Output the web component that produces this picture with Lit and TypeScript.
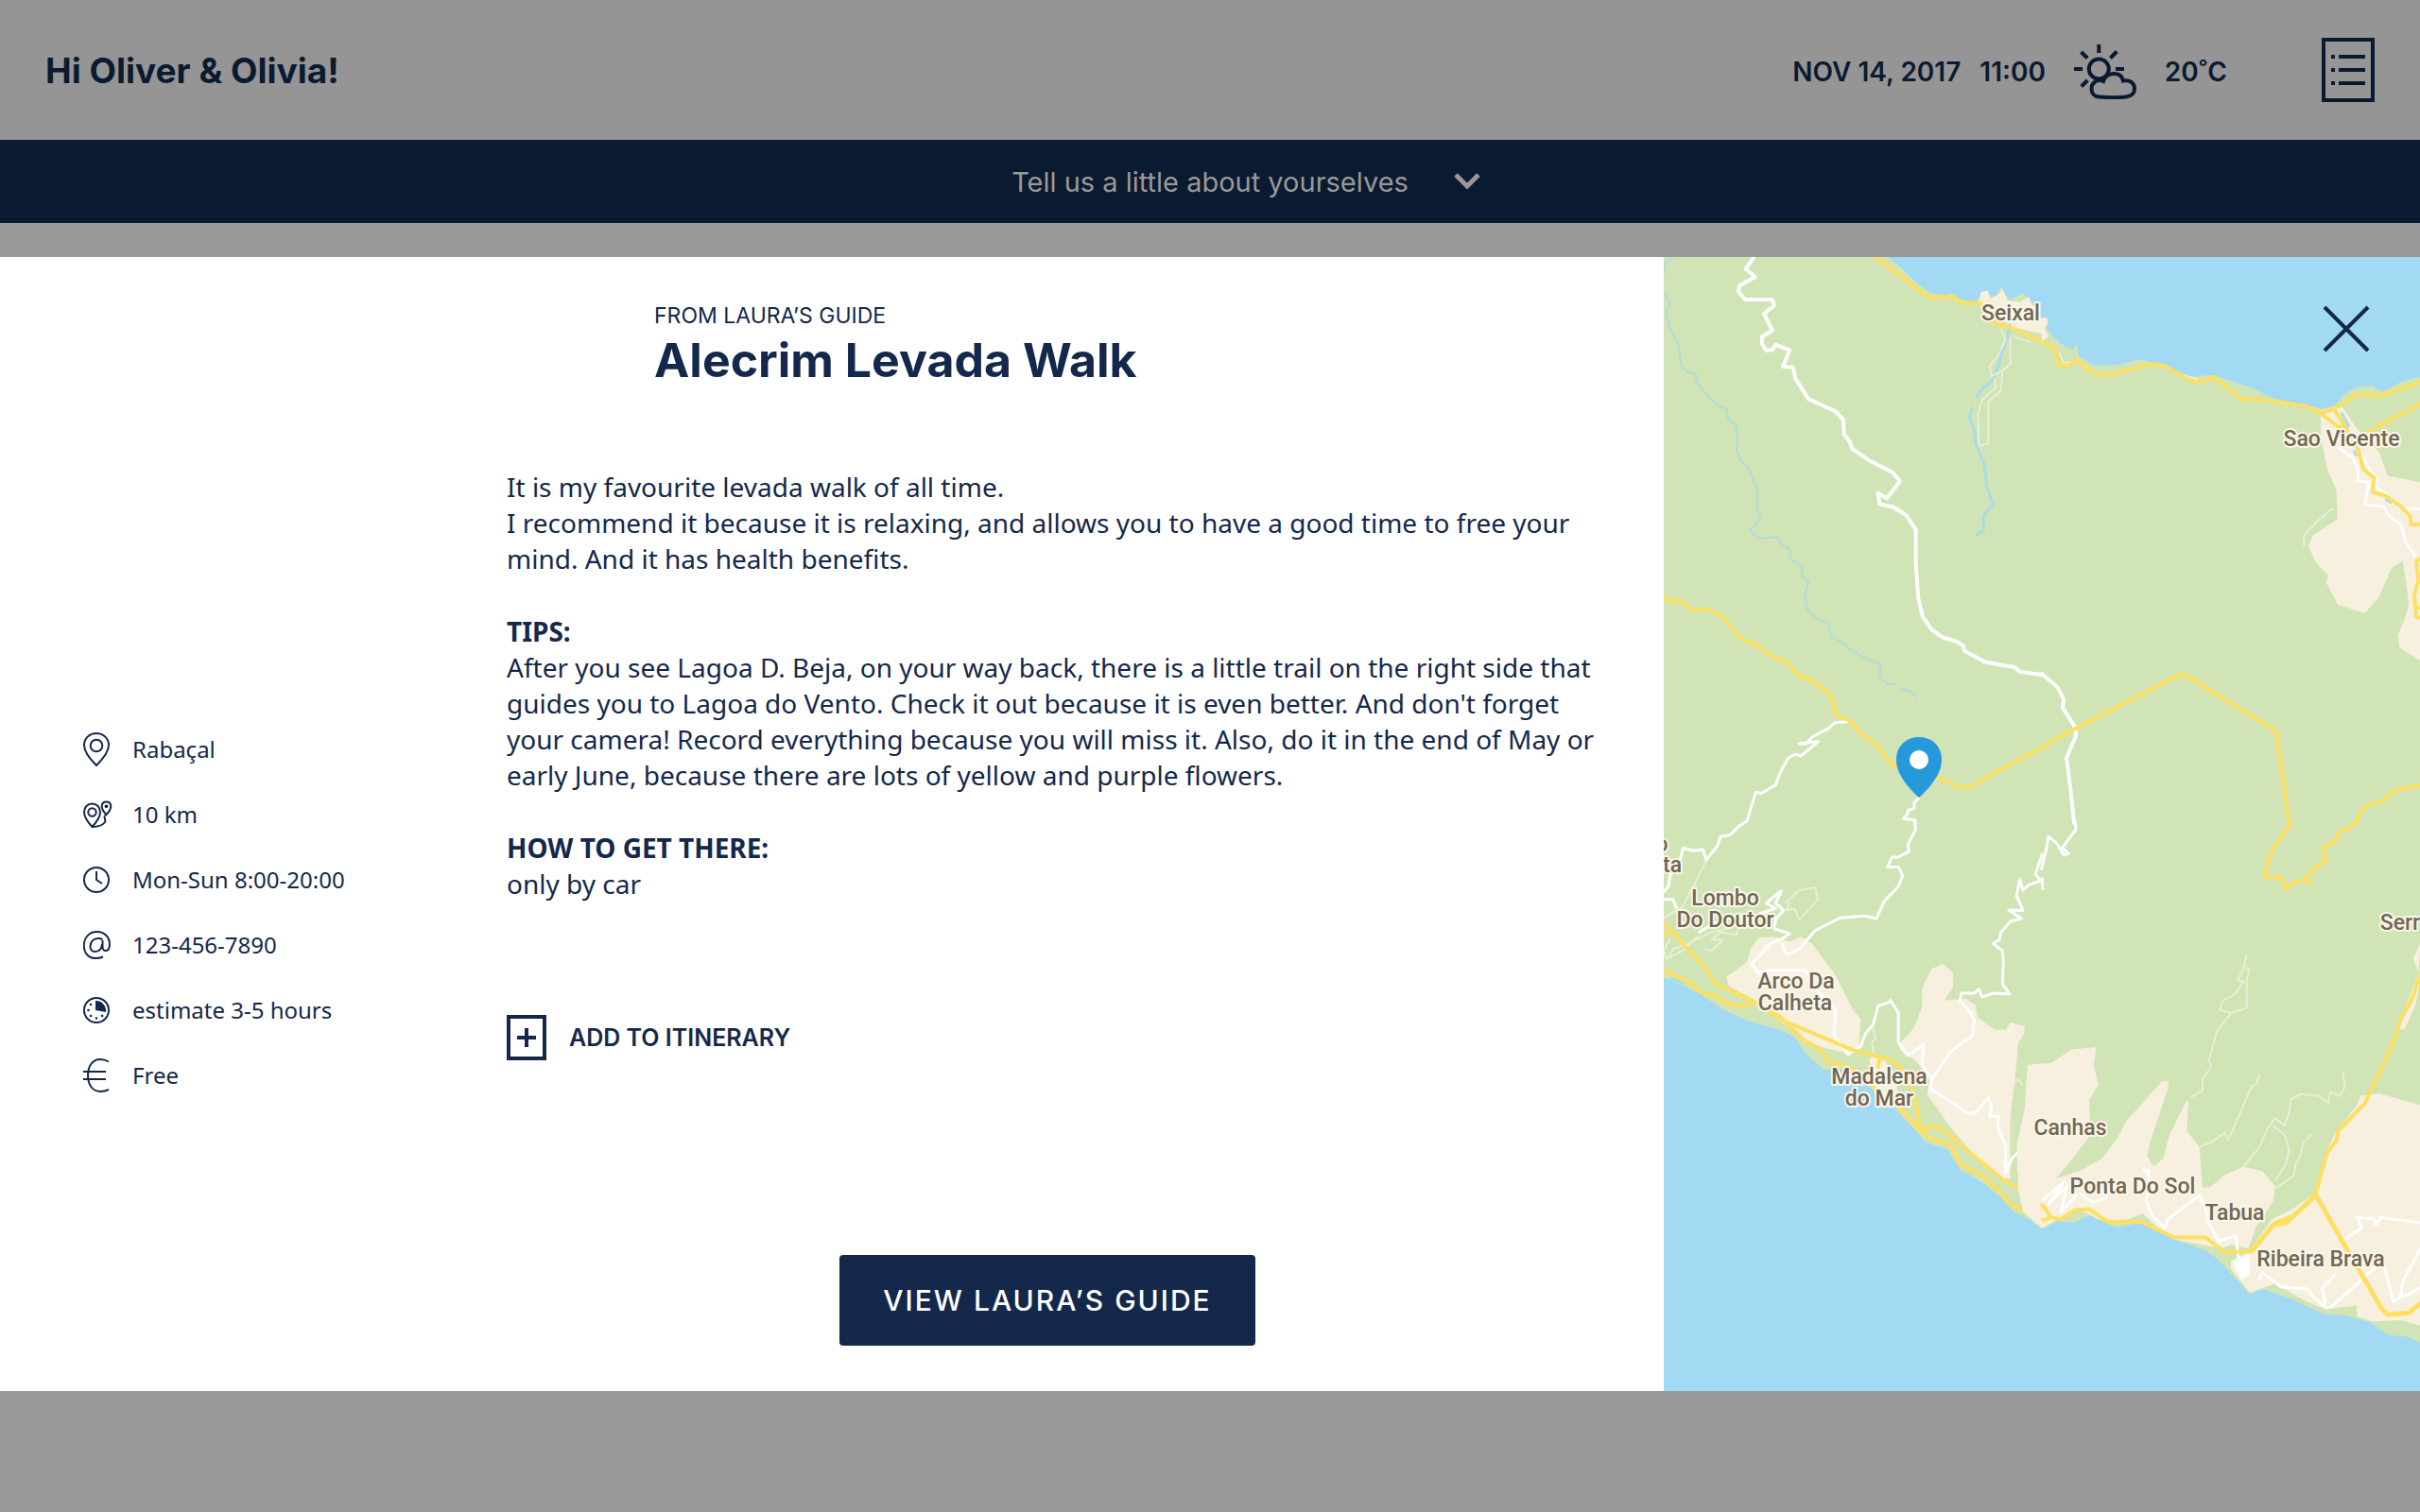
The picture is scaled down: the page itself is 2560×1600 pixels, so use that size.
import { LitElement, html, svg, css } from "lit";
import { customElement } from "lit/decorators.js";

/* ---------- Map data ---------- */

interface Tile {
  x: number;
  y: number;
  sx: number;
  sy: number;
  shapes: [kind: string, d: string][];
}

const SX = 0.3333;

/* Four map tiles, each with its own local coordinates. */
const tiles: Tile[] = [
  {
    x: 0, y: -2, sx: SX, sy: 0.3827,
    shapes: [
      ["sea", "M690 -10L760 40 800 75 840 100 880 112 915 105 945 122 990 130 1010 100 1025 105 1050 118 1070 90 1100 125 1140 105 1160 120 1202 175 1202 -10Z"],
      ["town", "M1000 128L1008 102 1028 98 1035 120 1065 108 1073 90 1090 125 1130 130 1160 115 1165 130 1202 180 1202 218 1110 200 1010 140Z"],
      ["stream", "M30 8L5 20 0 50M5 105L20 135 8 160 20 205 45 240 55 305 75 323 100 330 105 350 140 390 180 420 200 425 205 455 230 470 235 505 230 535 245 570 270 590 298 650 295 700 310 725 272 762 300 782 360 780 375 800 400 815 403 842 440 858 438 885 460 905 448 935 455 980 485 1005 525 1018 530 1055 565 1070 600 1095 645 1117 690 1130 685 1168 715 1187 740 1185M750 1198L785 1208 803 1222"],
      ["river", "M1100 190L1090 230 1072 270 1065 300 1045 345 1010 370 990 395M980 420L970 450 985 480 990 520 1018 580 1025 640 1045 690 1015 720 1015 760 988 778"],
      ["lane", "M1070 205L1085 235 1060 280 1035 305 1040 335 1075 320 1070 375 1030 405 1030 520 1000 528 998 440 1010 400 1055 365 1050 340M1100 225L1100 300 1075 320M1110 225L1165 240"],
      ["road", "M290 0L260 38 290 60 240 85 237 100 258 123 345 123 350 140 318 162 345 208 312 225 312 245 325 263 345 262 355 248 400 262 378 308 410 310 418 342 460 398 545 432 570 455 572 495 590 515 598 535 650 567 725 600 750 625 708 672 680 658 685 688 730 697 770 720 800 758 800 850 808 950 822 1000 850 1035 885 1057 925 1067 950 1080 955 1095 1020 1125 1115 1140 1130 1152 1202 1160"],
      ["minor", "M590 1290L545 1292 520 1310 475 1330 450 1352 430 1350 490 1345 435 1385 420 1380 395 1390 370 1430 355 1465 310 1488 292 1485 262 1570M810 1500L795 1515 795 1530 775 1535 775 1545 760 1558 798 1562 800 1574"],
      ["main", "M665 0L830 110 850 118 915 113 945 132 1005 133 1040 185 1100 200 1202 240M0 940L15 957 50 955 95 982 130 978 180 995 210 1025 225 1045 260 1068 290 1075 350 1112 390 1125 430 1163 460 1173 510 1200 540 1235 543 1270 595 1290 630 1327 670 1350 720 1405 810 1440 870 1443 930 1468 970 1473 1010 1450 1202 1360"],
    ],
  },
  {
    x: 400, y: -2, sx: SX, sy: 0.3827,
    shapes: [
      ["sea", "M-4 -10L-4 170 5 175 20 210 60 245 100 262 110 240 118 280 170 305 240 303 310 288 360 298 420 318 470 335 540 332 620 352 680 372 730 395 830 412 890 425 930 415 960 385 1000 363 1050 362 1080 378 1140 350 1202 335 1202 -10Z"],
      ["town", "M0 175L15 172 20 188 8 200 20 225 0 240Z"],
      ["town", "M885 430L950 415 1000 480 1070 545 1098 610 1202 628 1202 1122 1135 1085 1130 1050 1150 1010 1165 965 1155 900 1145 845 1110 865 1070 945 1025 990 940 967 902 905 908 885 870 850 845 805 860 775 938 730 935 650 905 590 885 500Z"],
      ["lane", "M55 270L70 300 90 295M440 330L500 345M930 703L915 705 870 740 832 775 832 805"],
      ["river", "M950 435L975 475M990 540L1000 555M1090 675L1110 685"],
      ["minor", "M940 530L985 560 1003 590 1003 625 1038 628 1025 690 1085 695 1100 720 1140 745 1155 795 1188 835M1010 545L1035 585 1065 620 1055 640 1100 665M1150 700L1202 702"],
      ["road", "M-4 1155L50 1195 70 1230 65 1250 105 1305 108 1330 78 1390 90 1470 103 1574"],
      ["main", "M-4 238L40 258 55 305 85 305 115 290 150 320 185 332 230 328 350 300 395 308 460 342 490 352 545 337 580 360 630 397 720 402 840 418 885 437 930 425 1000 385 1070 388 1140 370 1202 350M885 437L940 475 960 470 930 430M1030 492L1202 410M960 470L1005 540 1020 592 1055 615 1050 655 1090 665 1140 695 1168 720 1172 745 1202 745M1202 840L1188 845 1195 900 1182 940 1188 1000 1202 1003M1190 975L1202 975"],
      ["main", "M-4 1362L105 1310 440 1158 455 1160 745 1318 785 1574M995 1574L1015 1535 1035 1520 1080 1510 1110 1487 1150 1473 1202 1467"],
    ],
  },
  {
    x: 0, y: 598, sx: SX, sy: 0.389,
    shapes: [
      ["town", "M200 420L265 380 275 345 300 315 350 312 400 325 435 312 470 330 545 415 600 510 625 535 620 610 590 630 500 612 430 585 300 490 205 445Z"],
      ["town", "M655 640L690 635 735 690 745 760 700 745 650 700Z"],
      ["town", "M750 600L780 575 800 550 820 500 820 450 850 400 885 385 918 410 918 450 890 485 960 480 990 500 995 530 1050 565 1085 565 1100 545 1145 555 1145 575 1125 600 1115 700 1100 800 1100 970 1070 970 970 890 910 830 835 740 850 700 800 650 750 620Z"],
      ["sea", "M-2 422L60 445 120 470 190 510 280 545 370 565 420 590 450 630 510 675 560 670 650 720 700 750 790 830 830 870 900 890 940 945 1010 980 1070 1020 1110 1060 1160 1080 1202 1108 1202 1600 -2 1600Z"],
      ["river", "M20 425L65 438"],
      ["lane", "M135 103L100 165 60 230 0 260M10 375L30 345 80 330 150 300 200 290 250 255M10 375L0 350 20 315M15 370L60 350 110 310M130 345L150 350 190 320 150 320 180 300 230 305 240 280M385 220L430 185 480 178 490 210 430 265 415 235 390 240 400 215M665 560L672 590 660 600 670 640M1105 720L1125 700 1140 715"],
      ["minor", "M265 -3L240 10 210 35 180 40 170 65 135 103 125 75 95 78 62 70 50 110 20 145 15 175 0 190M0 210L30 210 40 235M375 330L390 360 430 345 480 295 560 260 640 255 675 262 700 215 745 175 758 145 745 122 710 122 725 95 745 95 778 80 775 60 800 20 795 -4M350 290L400 303 380 315 340 330 280 385 300 412 330 403 450 403 480 450 545 510 540 580 585 632 625 610 640 575 665 550 680 500 715 490 720 485 745 520 745 600 775 635 825 605 820 660 850 700M375 185L355 220 380 240 355 265 350 290M375 185L325 220 355 235 300 250M110 300L160 275 240 250"],
      ["minor", "M1202 85L1180 140 1195 160 1160 170 1140 185 1130 155 1120 200 1140 240 1095 240 1135 262 1100 270 1070 300 1065 320 1045 330 1075 350 1078 380 1075 440 1098 468 1050 465 1010 475 1000 455 985 465 945 465 940 485 975 520 985 540 980 580 910 625 850 700 845 725 920 765 965 793 990 790 1030 750 1040 770 1035 800 1062 800 1060 830 1085 880 1085 955 1105 915 1130 895 1140 910 1125 940 1140 980 1160 1000 1202 1010"],
      ["main", "M-2 272L130 395 165 440 290 490 380 540 600 620 690 640 740 655 780 705 800 760 815 835M-2 310L20 295M-2 403L70 430 130 468 160 470 200 493 250 500 290 490 370 530 440 590 500 620 520 650 600 672 650 700 680 740 740 770 815 840 840 830 875 828 960 890 1080 975 1150 1005 1202 1038M815 840L850 862 910 875 940 930 1010 960 1060 1000 1100 1040 1130 1050 1202 1095M685 640L680 670"],
    ],
  },
  {
    x: 400, y: 598, sx: SX, sy: 0.389,
    shapes: [
      ["town", "M-45 660L30 655 95 618 172 612 165 665 180 715 150 755 155 850 120 890 45 970 130 945 190 915 240 860 270 810 320 765 380 705 403 705 400 725 340 880 335 910 355 937 385 915 405 850 460 755 465 760 460 840 500 885 510 995 535 993 580 960 640 937 700 950 740 990 735 1030 680 1100 655 1160 600 1150 570 1160 420 1135 370 1105 320 1065 260 1085 180 1080 110 1050 0 1105 -60 1060 -75 1000 -80 880 -55 780Z"],
      ["town", "M1010 745L1070 738 1202 770 1202 1370 1140 1355 1050 1358 1000 1345 1000 1315 900 1325 830 1300 740 1255 660 1280 600 1215 600 1195 660 1165 730 1080 800 1050 880 1000 900 900 935 840 1000 770Z"],
      ["town", "M1202 330L1178 370 1202 425 1185 500 1150 565 1125 560 1160 490 1195 415Z"],
      ["sea", "M-2 1108L50 1085 100 1090 150 1070 200 1090 240 1103 310 1090 420 1135 520 1165 560 1190 660 1285 700 1270 800 1300 900 1340 960 1342 1040 1360 1100 1395 1160 1400 1202 1418 1202 1600 -2 1600Z"],
      ["lane", "M650 360L640 395 660 400 650 430 650 505 600 520 565 510 575 485 600 475 615 465 640 435 620 430 640 400M600 520L555 570 530 650 538 665 510 700 510 730 470 750M690 685L682 710 665 720 605 840 590 865 580 845 540 870 500 883M955 680L962 720 945 745 915 735 910 765 880 745 820 740 790 755 785 790 770 825 740 805 715 835 690 885 640 937M735 825L770 850 785 890 775 930 740 975M855 850L830 870 820 910 805 930 800 960 745 995"],
      ["block", "M605 1195L660 1175 660 1230 635 1245Z"],
      ["minor", "M-2 130L15 70 20 40 45 55 70 90 85 85 65 70 108 20 105 -4M0 150L3 185M335 950L345 980 330 1030 350 1070 390 1105 400 1080 500 1015 520 1050 530 1090 560 1140 615 1125 620 1160 625 1190M690 1245L700 1225 760 1265 845 1270 860 1290 900 1320 920 1318 1060 1210M960 1135L1015 1105 1000 1075 1055 1080 1060 1095 1075 1075 1202 1090M900 1310L890 1270 930 1230M1080 1190L1100 1250 1115 1305 1140 1290 1145 1250 1202 1160M1130 1290L1165 1285 1202 1265M0 1030L70 980 20 1040 80 990 60 1060 110 1015M320 945L345 950M120 1010L160 1035 210 1020"],
      ["main", "M785 -4L785 10 735 70 720 100 705 148 760 150 775 182 800 165 840 155 855 172M845 152L845 140 905 100 895 90 895 65 930 55 940 28 970 20 1000 -2"],
      ["main", "M-2 1038L30 1075 60 1080 105 1055 150 1053 210 1087 315 1087 420 1130 520 1130 580 1170 665 1168 740 1090 800 1070 870 1010 885 960 905 900 935 865 940 840 1025 765 1075 675 1115 600 1140 535 1175 480 1202 415M-2 1082L20 1080 25 1065"],
      ["trunk", "M665 1168L735 1095 775 1090 870 1015 960 1150 1080 1325 1100 1340 1165 1335 1202 1308"],
    ],
  },
];

const places: [name: string, x: number, y: number][] = [
  ["Seixal", 367, 67],
  ["Sao Vicente", 717, 200],
  ["o", -2, 629],
  ["ta", 9, 651],
  ["Lombo", 65, 686],
  ["Do Doutor", 65, 709],
  ["Arco Da", 140, 774],
  ["Calheta", 139, 797],
  ["Madalena", 228, 875],
  ["do Mar", 228, 898],
  ["Canhas", 430, 929],
  ["Ponta Do Sol", 496, 991],
  ["Tabua", 604, 1019],
  ["Ribeira Brava", 695, 1068],
  ["Serr", 779, 712],
];

/* ---------- Fact icons ---------- */

const pinIcon = svg`<path d="M15 35C8 28 2 20.500 2 13.500C2 6.500 7.500 1 15 1S28 6.500 28 13.500C28 20.500 22 28 15 35Z"/><circle cx="15" cy="14" r="6.300"/>`;
const routeIcon = svg`<path d="M10.500 31C6 26 2 21 2 15.500C2 10 5.500 6.500 10.500 6.500S19 10 19 15.500C19 21 15 26 10.500 31Z"/><circle cx="10.500" cy="15.500" r="4.200"/><path d="M25.500 18C22.500 15 20.700 12 20.700 9.200C20.700 6.300 22.500 4.400 25.500 4.400S30.300 6.300 30.300 9.200C30.300 12 28.500 15 25.500 18ZC20.500 21 26 22 24 26C21 30 15 31 10.500 31"/><circle class="dot" cx="25.500" cy="9.200" r="1.800"/>`;
const clockIcon = svg`<circle cx="15" cy="18" r="13"/><path d="M15 9V18L21 22"/>`;
const atIcon = svg`<path d="M21.500 13V20C21.500 26 29 25.500 29 17.500C29 9.500 23.500 4 15.500 4C7.500 4 1.800 10 1.800 18.500C1.800 27 7 32 14.500 32C17.500 32 20 31.500 22 30.500M21.500 12C20 11.300 18.500 11 17 11C12 11 8.500 14.500 8.500 19.500C8.500 23 10.500 25 13.500 25C17.500 25 20.500 22 21 17"/>`;
const durationIcon = svg`<circle cx="15" cy="18" r="13"/><path class="fill" d="M14 8A10.500 10.500 0 0 1 25 20L14 18Z"/><g class="fill"><circle cx="9" cy="12" r="1.300"/><circle cx="6.500" cy="18" r="1.300"/><circle cx="9" cy="24" r="1.300"/><circle cx="15" cy="26.500" r="1.300"/><circle cx="21" cy="24" r="1.300"/></g>`;
const euroIcon = svg`<path d="M28 3.500C25 1.800 22 1 19 1C11 1 6 8 6 18S11 35 19 35C22 35 25 34.500 28 33M1 14H25M1 22H25"/>`;

const facts = [
  { icon: pinIcon, text: "Rabaçal" },
  { icon: routeIcon, text: "10 km" },
  { icon: clockIcon, text: "Mon-Sun 8:00-20:00" },
  { icon: atIcon, text: "123-456-7890" },
  { icon: durationIcon, text: "estimate 3-5 hours" },
  { icon: euroIcon, text: "Free" },
];

/* ---------- Map ---------- */

@customElement("guide-map")
export class GuideMap extends LitElement {
  static styles = css`
    :host {
      display: block;
      position: relative;
      overflow: hidden;
      background: #d0e4b5;
    }
    .canvas {
      position: absolute;
      inset: 0;
      width: 100%;
      height: 100%;
    }
    .canvas path {
      vector-effect: non-scaling-stroke;
      fill: none;
      stroke-linejoin: round;
    }
    .canvas .sea { fill: #a2daf4; }
    .canvas .town { fill: #f7f0df; }
    .canvas .block { fill: #ffffff; }
    .canvas .stream { stroke: #b0dddb; stroke-width: 2px; }
    .canvas .river { stroke: #a9dce6; stroke-width: 3px; }
    .canvas .lane { stroke: #e8efd9; stroke-width: 2px; }
    .canvas .minor { stroke: #ffffff; stroke-width: 3px; }
    .canvas .road { stroke: #ffffff; stroke-width: 4px; }
    .canvas .main { stroke: #fddf62; stroke-width: 4px; }
    .canvas .trunk { stroke: #fddf62; stroke-width: 5px; }
    .canvas .pin { fill: #2699da; }
    .hole { fill: #ffffff; }
    .place {
      font: 500 23px "Roboto", sans-serif;
      fill: #746750;
      stroke: #f9f6ec;
      stroke-width: 4px;
      stroke-linejoin: round;
      paint-order: stroke;
      text-anchor: middle;
    }
  `;

  render() {
    return html`
      <svg class="canvas" viewBox="0 0 800 1200" preserveAspectRatio="xMidYMid slice" role="img" aria-label="Map">
        ${tiles.map(
          (t) => svg`<g transform="translate(${t.x} ${t.y}) scale(${t.sx} ${t.sy})">
            ${t.shapes.map(([kind, d]) => svg`<path class=${kind} d=${d}></path>`)}
          </g>`
        )}
        ${places.map(([name, x, y]) => svg`<text class="place" x=${x} y=${y}>${name}</text>`)}
        <path class="pin" d="M270 572C258 561 246 547 246 532C246 518 256 508 270 508S294 518 294 532C294 547 282 561 270 572Z"></path>
        <circle class="hole" cx="270" cy="532" r="10"></circle>
      </svg>
    `;
  }
}

/* ---------- Page ---------- */

@customElement("app-root")
export class AppRoot extends LitElement {
  static styles = css`
    :host {
      display: block;
      min-height: 100vh;
      background: #999999;
      color: #14284b;
      font-family: "Noto Sans", sans-serif;
    }
    * { box-sizing: border-box; }
    h1, h2, h3, p, ul { margin: 0; padding: 0; }
    button {
      border: 0;
      padding: 0;
      background: none;
      color: inherit;
      cursor: pointer;
    }
    svg { display: block; flex: none; }

    .topbar {
      display: flex;
      align-items: center;
      height: 148px;
      padding: 0 48px;
      background: #959595;
      color: #0a1a30;
      font-family: "Inter", sans-serif;
    }
    .greeting {
      flex: 1;
      padding-top: 2px;
      font-size: 37px;
      font-weight: 700;
      line-height: 44px;
    }
    .status {
      display: flex;
      align-items: center;
      gap: 30px;
      padding-top: 4px;
      font-size: 28px;
      font-weight: 600;
    }
    .when { display: flex; gap: 20px; }
    .menu { margin-left: 100px; }
    .line { fill: none; stroke: currentColor; stroke-width: 4px; }

    .about {
      display: flex;
      align-items: center;
      justify-content: center;
      gap: 48px;
      width: 100%;
      height: 88px;
      padding-left: 76px;
      background: #0a1a30;
      color: #999999;
      font: 400 29px "Inter", sans-serif;
    }
    .about .line { stroke-width: 5px; }

    .dialog {
      display: grid;
      grid-template-columns: 11fr 5fr;
      min-height: 1200px;
      margin-top: 36px;
      background: #ffffff;
    }
    .detail {
      display: grid;
      grid-template-columns: 448px 1fr;
      grid-template-rows: auto 1fr auto;
      padding: 48px 48px 48px 88px;
    }
    .heading {
      grid-column: 2;
      padding-left: 156px;
      font-family: "Inter", sans-serif;
    }
    .eyebrow { font-size: 23px; line-height: 28px; }
    h2 { font-size: 50px; line-height: 66px; }
    .facts {
      grid-row: 2;
      display: flex;
      flex-direction: column;
      gap: 32px;
      padding-top: 360px;
      list-style: none;
      font-size: 24px;
      line-height: 37px;
    }
    .facts li { display: flex; align-items: center; gap: 16px; }
    .facts svg {
      fill: none;
      stroke: currentColor;
      stroke-width: 2px;
      stroke-linejoin: round;
    }
    .facts .fill { fill: currentColor; stroke: none; }
    .facts .dot { fill: #000000; stroke: none; }
    .story {
      grid-column: 2;
      padding-top: 82px;
      font-size: 28px;
      line-height: 38px;
    }
    .story p { margin-bottom: 39px; }
    .story h3 { font-size: 28px; font-weight: 700; }
    .add {
      display: flex;
      align-items: center;
      gap: 24px;
      margin-top: 120px;
      font: 600 25px "Inter", sans-serif;
    }
    .footer {
      grid-column: 2;
      display: flex;
      justify-content: center;
      padding-right: 32px;
    }
    .guide {
      min-width: 440px;
      height: 96px;
      border-radius: 4px;
      background: #14284b;
      color: #ffffff;
      font: 500 30px "Inter", sans-serif;
      letter-spacing: 2px;
    }
    .side { position: relative; display: grid; }
    .close {
      position: absolute;
      top: 51px;
      right: 53px;
    }
  `;

  render() {
    return html`
      <header class="topbar">
        <h1 class="greeting">Hi Oliver &amp; Olivia!</h1>
        <div class="status">
          <div class="when"><span>NOV 14, 2017</span><span>11:00</span></div>
          <svg class="line" width="66" height="58" viewBox="0 0 66 58" aria-hidden="true">
            <circle cx="26.300" cy="26" r="10.500"></circle>
            <path d="M26.300 0V9M7.500 8L14.300 14.500M45.300 7.500L38.500 14.500M0 26H9M44 26H53M14.300 38L7.700 44.500"></path>
            <path d="M31 39C24 36 18.500 41 18.500 47C18.500 52 22 55.500 27 55.500C36 56.300 48 56.300 55 55.500C61 55 64 51 64 47C64 41 59 37 52 38.500C51 33 47 31 42 31C36 31 32 35 31 39Z"></path>
          </svg>
          <span>20˚C</span>
        </div>
        <button class="menu" aria-label="Itinerary">
          <svg class="line" width="56" height="68" viewBox="0 0 56 68">
            <rect x="2" y="2" width="52" height="64"></rect>
            <path d="M10 20H14M18 20H46M10 34H14M18 34H46M10 48H14M18 48H46"></path>
          </svg>
        </button>
      </header>

      <button class="about">
        <span>Tell us a little about yourselves</span>
        <svg class="line" width="28" height="18" viewBox="0 0 28 18" aria-hidden="true"><path d="M2 2L14 14L26 2"></path></svg>
      </button>

      <section class="dialog" role="dialog" aria-labelledby="title">
        <div class="detail">
          <header class="heading">
            <p class="eyebrow">FROM LAURA’S GUIDE</p>
            <h2 id="title">Alecrim Levada Walk</h2>
          </header>
          <ul class="facts">
            ${facts.map(
              (f) => html`<li>
                <svg width="36" height="36" viewBox="1 0 36 36" aria-hidden="true">${f.icon}</svg>
                <span>${f.text}</span>
              </li>`
            )}
          </ul>
          <div class="story">
            <p>
              It is my favourite levada walk of all time.<br />
              I recommend it because it is relaxing, and allows you to have a good time to free your mind. And it has
              health benefits.
            </p>
            <h3>TIPS:</h3>
            <p>
              After you see Lagoa D. Beja, on your way back, there is a little trail on the right side that guides you
              to Lagoa do Vento. Check it out because it is even better. And don't forget your camera! Record everything
              because you will miss it. Also, do it in the end of May or early June, because there are lots of yellow
              and purple flowers.
            </p>
            <h3>HOW TO GET THERE:</h3>
            <p>only by car</p>
            <button class="add">
              <svg class="line" width="42" height="48" viewBox="0 0 42 48" aria-hidden="true">
                <rect x="2" y="2" width="38" height="44"></rect>
                <path d="M11 24H31M21 14V34"></path>
              </svg>
              <span>ADD TO ITINERARY</span>
            </button>
          </div>
          <footer class="footer">
            <button class="guide">VIEW LAURA’S GUIDE</button>
          </footer>
        </div>
        <div class="side">
          <guide-map></guide-map>
          <button class="close" aria-label="Close">
            <svg class="line" width="50" height="50" viewBox="0 0 50 50"><path d="M2 2L48 48M48 2L2 48"></path></svg>
          </button>
        </div>
      </section>
    `;
  }
}
